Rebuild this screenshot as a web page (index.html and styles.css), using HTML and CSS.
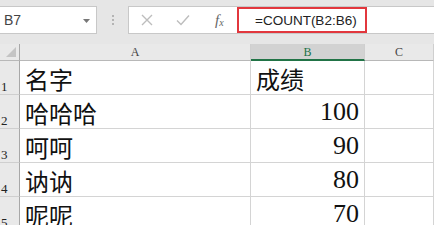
FILE: index.html
```html
<!DOCTYPE html>
<html>
<head>
<meta charset="utf-8">
<link rel="stylesheet" href="styles.css">
</head>
<body>
<div class="app">
  <div class="toolbar">
    <div class="namebox">
      <span class="name">B7</span>
      <svg class="caret" width="7" height="4" viewBox="0 0 7 4"><path d="M0 0H7L3.5 4Z" fill="#777"/></svg>
    </div>
    <div class="sep"><i></i><i></i><i></i></div>
    <div class="formula">
      <div class="fbtns">
        <svg class="ic" width="12" height="12" viewBox="0 0 12 12"><path d="M1 1L11 11M11 1L1 11" stroke="#bdbdbd" stroke-width="1.4" fill="none"/></svg>
        <svg class="ic" width="14" height="12" viewBox="0 0 14 12"><path d="M1 6.5L5 10.5L13 1.5" stroke="#bdbdbd" stroke-width="1.4" fill="none"/></svg>
        <span class="fx">f<sub>x</sub></span>
      </div>
      <div class="finput"><span class="ftext">=COUNT(B2:B6)</span></div>
    </div>
  </div>
  <div class="grid">
    <div class="corner"><span class="tri"></span></div>
    <div class="ch">A</div>
    <div class="ch sel">B</div>
    <div class="ch">C</div>

    <div class="rh">1</div><div class="c txt">名字</div><div class="c txt">成绩</div><div class="c"></div>
    <div class="rh">2</div><div class="c txt">哈哈哈</div><div class="c num">100</div><div class="c"></div>
    <div class="rh">3</div><div class="c txt">呵呵</div><div class="c num">90</div><div class="c"></div>
    <div class="rh">4</div><div class="c txt">讷讷</div><div class="c num">80</div><div class="c"></div>
    <div class="rh">5</div><div class="c txt">呢呢</div><div class="c num">70</div><div class="c"></div>
  </div>
</div>
</body>
</html>
```
FILE: styles.css
```css
html, body {
  margin: 0;
  padding: 0;
  background: #ffffff;
}
.app {
  width: 434px;
  height: 225px;
  overflow: hidden;
  font-family: "Liberation Sans", "Noto Sans CJK SC", sans-serif;
}
.toolbar {
  height: 44px;
  box-sizing: border-box;
  background: #e6e6e6;
  padding-top: 6px;
  display: flex;
  align-items: flex-start;
}
.namebox {
  width: 98px;
  height: 28px;
  box-sizing: border-box;
  margin-left: -1px;
  background: #fff;
  border: 1px solid #c8c8c8;
  display: flex;
  align-items: center;
  justify-content: space-between;
  padding: 0 6px 0 4px;
}
.name {
  font-size: 14px;
  color: #444;
}
.caret {
  display: block;
  margin-top: 1px;
}
.sep {
  width: 31px;
  height: 28px;
  display: flex;
  flex-direction: column;
  align-items: center;
  justify-content: center;
  gap: 2px;
}
.sep i {
  width: 2px;
  height: 2px;
  background: #b4b4b4;
}
.formula {
  flex: 1;
  height: 28px;
  box-sizing: border-box;
  background: #fff;
  border: 1px solid #c8c8c8;
  border-right: none;
  display: flex;
  align-items: center;
}
.fbtns {
  display: flex;
  align-items: center;
  padding-left: 12px;
  gap: 23px;
  width: 108px;
  box-sizing: border-box;
}
.ic {
  display: block;
}
.fx {
  font-family: "Liberation Serif", serif;
  font-style: italic;
  font-size: 15px;
  color: #666;
  margin-left: 2px;
}
.fx sub {
  font-size: 10px;
  vertical-align: -1px;
}
.finput {
  height: 26px;
  width: 130px;
  box-sizing: border-box;
  border: 2px solid #e2373d;
  display: flex;
  align-items: center;
  padding-left: 16px;
}
.ftext {
  font-size: 13.5px;
  color: #222;
}
.grid {
  display: grid;
  grid-template-columns: 20px 231px 114px 1fr;
  grid-template-rows: 17px repeat(5, 34px);
}
.grid > div {
  box-sizing: border-box;
  border-right: 1px solid #d4d4d4;
  border-bottom: 1px solid #d4d4d4;
}
.corner {
  background: #e9e9e9;
  position: relative;
  border-right-color: #a8a8a8 !important;
  border-bottom-color: #b8b8b8 !important;
}
.tri {
  position: absolute;
  right: 3px;
  bottom: 3px;
  width: 0;
  height: 0;
  border-left: 10px solid transparent;
  border-bottom: 10px solid #c4c4c4;
}
.ch {
  background: #e9e9e9;
  border-bottom-color: #b8b8b8 !important;
  border-right-color: #cfcfcf !important;
  font-family: "Liberation Serif", serif;
  font-size: 12px;
  color: #444;
  display: flex;
  align-items: center;
  justify-content: center;
  padding-top: 1px;
}
.ch.sel {
  background: #d2d2d2;
  border-bottom: 2px solid #217346 !important;
  color: #217346;
}
.rh {
  background: #e9e9e9;
  border-right-color: #a8a8a8 !important;
  border-bottom-color: #cfcfcf !important;
  font-family: "Liberation Serif", serif;
  font-size: 13px;
  color: #222;
  display: flex;
  align-items: flex-end;
  padding-left: 1px;
  padding-bottom: 0;
  line-height: 15px;
}
.c {
  display: flex;
  align-items: flex-end;
  color: #111;
}
.txt {
  font-family: "Noto Sans CJK SC", sans-serif;
  font-size: 24px;
  line-height: 26px;
  padding-left: 5px;
  padding-bottom: 2px;
}
.num {
  justify-content: flex-end;
  font-family: "Liberation Serif", serif;
  font-size: 26px;
  line-height: 26px;
  padding-right: 5px;
  padding-bottom: 3px;
}
```
